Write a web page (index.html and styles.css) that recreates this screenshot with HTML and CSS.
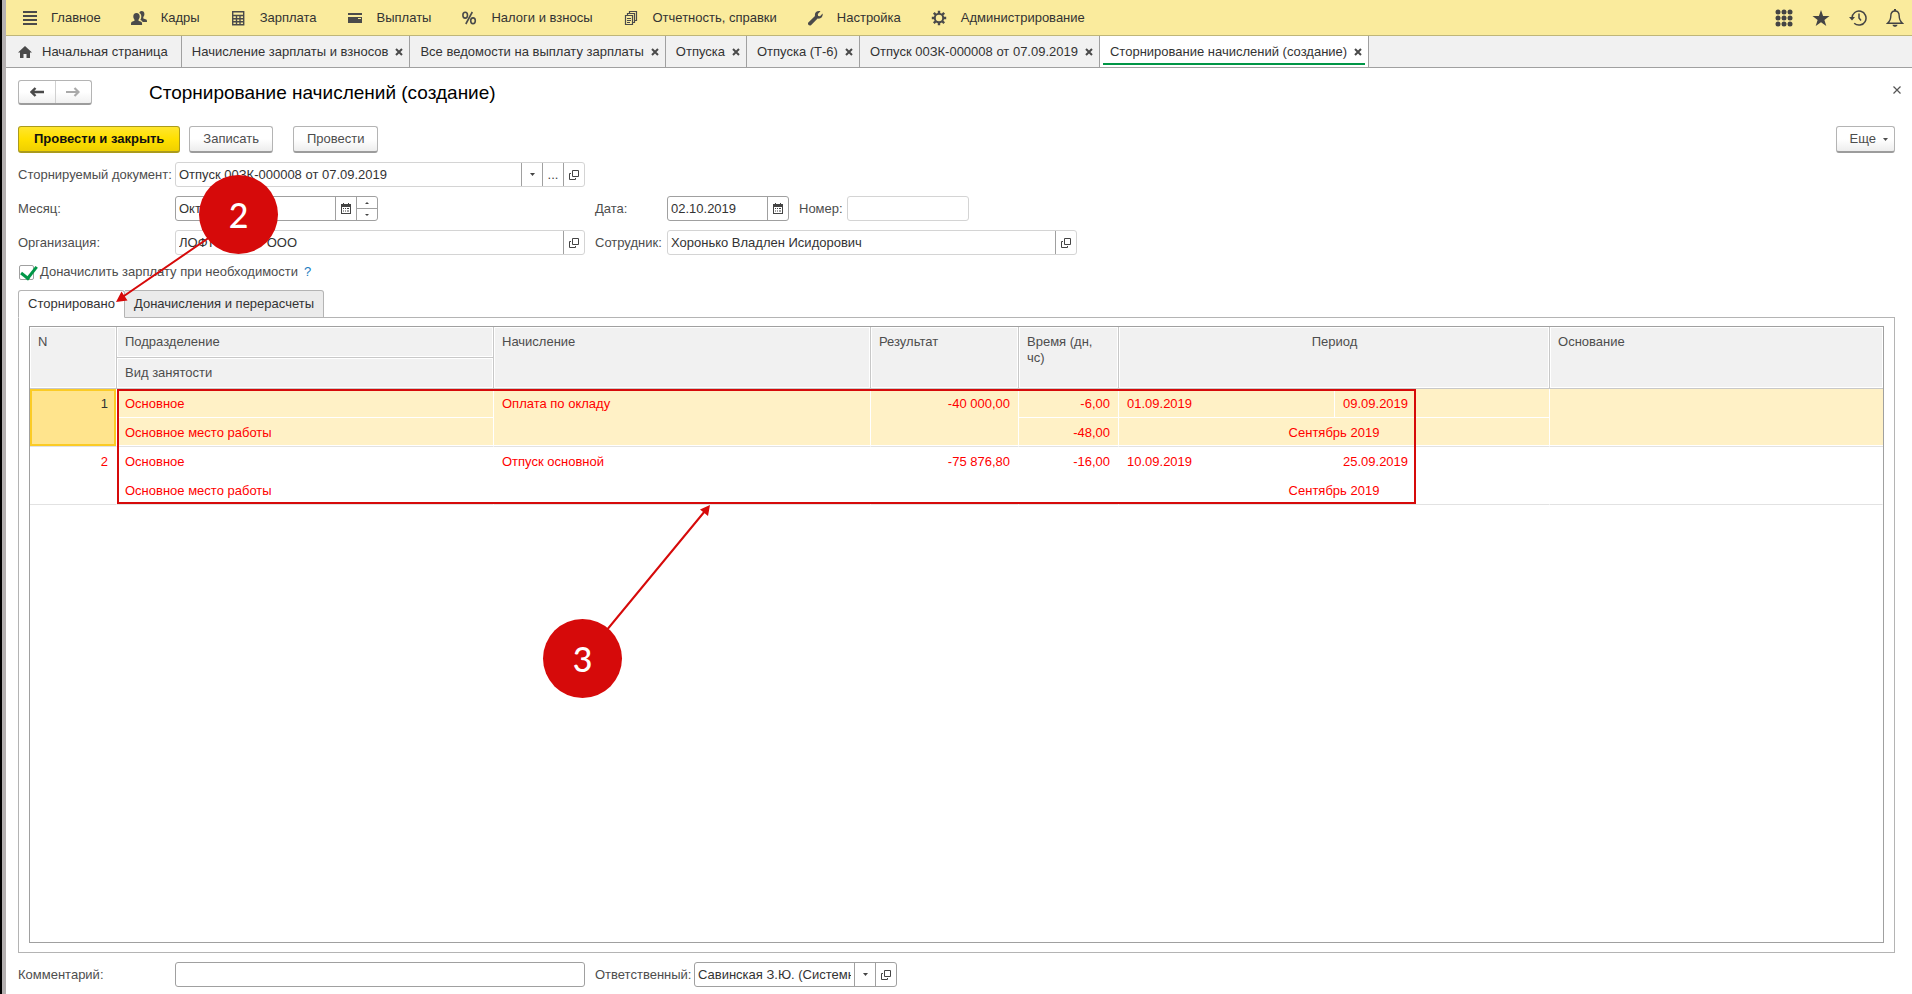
FILE: index.html
```html
<!DOCTYPE html>
<html lang="ru">
<head>
<meta charset="utf-8">
<title>Сторнирование начислений (создание)</title>
<link rel="stylesheet" href="styles.css">
</head>
<body>
<svg class="defs" aria-hidden="true">
  <symbol id="close" viewBox="0 0 8 8"><path d="M1 1l6 6M7 1L1 7" stroke="currentColor" stroke-width="2" fill="none"/></symbol>
  <symbol id="caret" viewBox="0 0 5 3"><path d="M0 0h5L2.500 3z" fill="currentColor"/></symbol>
  <symbol id="open" viewBox="0 0 10 10"><path d="M3.500.5h6v6h-6zM2 3.500H.5v6h6V8" stroke="currentColor" fill="none"/></symbol>
  <symbol id="calendar" viewBox="0 0 10 11"><path d="M0 1h2V0h1v1h4V0h1v1h2v10H0zM1 4v6h8V4z" fill="currentColor" fill-rule="evenodd"/><path d="M2 5.500h1M4 5.500h1M6 5.500h2M2 8h1M4 8h1M6 8h2" stroke="currentColor"/></symbol>
</svg>
<div class="app">
  <header class="topbar">
    <nav class="sections">
      <a class="section" href="#"><svg class="section-icon" viewBox="0 0 16 16"><path d="M2 2h14M2 6h14M2 10h14M2 14h14" stroke="currentColor" stroke-width="2"/></svg>Главное</a>
      <a class="section" href="#"><svg class="section-icon" viewBox="0 0 16 16"><path d="M10.500 1c2 0 2.900 1.300 2.900 3 0 1.400-.5 2.400-1.100 3v1.500l2.900 1c.7.400.8 1 .8 2.500h-4.400c-.3-.9-1.200-1.500-2.300-1.900.7-1 1-2.300 1-3.600 0-1.700-.7-2.900-2-3.500C8.600 1.700 9.300 1 10.500 1z" fill="currentColor"/><path d="M5.500 3C7.600 3 8.700 4.500 8.700 6.500c0 1.400-.6 2.500-1.200 3.200v1.100l2.700 1c.8.400.9 1.200.9 3.200H0c0-2 .1-2.800.9-3.200l2.600-1V9.700C2.900 9 2.300 7.900 2.300 6.500c0-2 1-3.500 3.200-3.500z" fill="currentColor"/></svg>Кадры</a>
      <a class="section" href="#"><svg class="section-icon" viewBox="0 0 16 16"><path d="M2.700 1.700h11v13h-11zM3 5.500h11M6.500 6v9M10 6v9M3 8.700h11M3 11.700h11" stroke="currentColor" stroke-width="1.400" fill="none"/></svg>Зарплата</a>
      <a class="section" href="#"><svg class="section-icon" viewBox="0 0 16 16"><path d="M1 3h14v2H1zM1 7h14v6H1z" fill="currentColor"/><path d="M11 8h3v1h-3z" fill="#faeb9d"/></svg>Выплаты</a>
      <a class="section" href="#"><svg class="section-icon" viewBox="0 0 16 16"><g stroke="currentColor" stroke-width="1.600" fill="none"><ellipse cx="4.200" cy="5.200" rx="2.300" ry="2.900"/><ellipse cx="12" cy="10.800" rx="2.300" ry="2.900"/><path d="M11.300 2L4.800 14"/></g></svg>Налоги и взносы</a>
      <a class="section" href="#"><svg class="section-icon" viewBox="0 0 16 16"><path d="M2.500 5.500h7v9h-7zM4.500 5V3.500h7v9H10M6.500 3V1.500h7v9H12M4 8.500h4M4 10.500h4M4 12.500h3" stroke="currentColor" stroke-width="1.200" fill="none"/></svg>Отчетность, справки</a>
      <a class="section" href="#"><svg class="section-icon" viewBox="0 0 16 16"><path d="M13.500 1.300L10.800 4l.3 1.900 1.900.3 2.600-2.700c.7 3.200-1.800 5.800-5 5L4 15.200c-1.700 1.300-3.900-.9-2.700-2.700L8 6C7.200 2.700 10.200.2 13.500 1.300z" fill="currentColor"/></svg>Настройка</a>
      <a class="section" href="#"><svg class="section-icon" viewBox="0 0 16 16"><circle cx="8" cy="8" r="4.200" stroke="currentColor" stroke-width="2" fill="none"/><path d="M8 .8v3M8 12.200v3M.8 8h3M12.200 8h3M2.800 2.800L5 5M11 11l2.200 2.200M13.200 2.800L11 5M5 11l-2.200 2.200" stroke="currentColor" stroke-width="2.400"/></svg>Администрирование</a>
    </nav>
    <div class="tools">
      <button class="tool" aria-label="Функции"><svg viewBox="0 0 18 18"><g fill="currentColor"><circle cx="3" cy="3" r="2.500"/><circle cx="9" cy="3" r="2.500"/><circle cx="15" cy="3" r="2.500"/><circle cx="3" cy="9" r="2.500"/><circle cx="9" cy="9" r="2.500"/><circle cx="15" cy="9" r="2.500"/><circle cx="3" cy="15" r="2.500"/><circle cx="9" cy="15" r="2.500"/><circle cx="15" cy="15" r="2.500"/></g></svg></button>
      <button class="tool" aria-label="Избранное"><svg viewBox="0 0 18 18"><path d="M9 1l2.100 6 6.400.1-5.100 3.800 1.900 6.100L9 13.300 3.700 17l1.900-6.100L.5 7.100 6.900 7z" fill="currentColor"/></svg></button>
      <button class="tool" aria-label="История"><svg viewBox="0 0 18 18"><path d="M3 9a7 7 0 1 1 2.200 5.200M10 4.500V9l2 2.500" stroke="currentColor" stroke-width="1.500" fill="none"/><path d="M0 8h6l-3 3.500z" fill="currentColor"/></svg></button>
      <button class="tool" aria-label="Оповещения"><svg viewBox="0 0 18 18"><path d="M9 2c3 0 4.200 2.300 4.200 5 0 4 1.200 5.500 3.300 7.300h-15C3.600 12.500 4.800 11 4.800 7c0-2.700 1.200-5 4.200-5z" stroke="currentColor" stroke-width="1.400" fill="none"/><path d="M8 0h2v2H8zM6.500 15.800h5c-.3 1.400-1.200 2-2.500 2s-2.200-.6-2.500-2z" fill="currentColor"/></svg></button>
    </div>
  </header>

  <nav class="windows">
    <a class="window window-home" href="#"><svg class="home" viewBox="0 0 14 12"><path d="M7 0l7 6.500h-2V12H8.500V8h-3v4H2V6.500H0z" fill="currentColor"/></svg>Начальная страница</a>
    <div class="window"><a href="#">Начисление зарплаты и взносов</a><button class="window-close" aria-label="Закрыть"><svg><use href="#close"/></svg></button></div>
    <div class="window"><a href="#">Все ведомости на выплату зарплаты</a><button class="window-close" aria-label="Закрыть"><svg><use href="#close"/></svg></button></div>
    <div class="window"><a href="#">Отпуска</a><button class="window-close" aria-label="Закрыть"><svg><use href="#close"/></svg></button></div>
    <div class="window"><a href="#">Отпуска (Т-6)</a><button class="window-close" aria-label="Закрыть"><svg><use href="#close"/></svg></button></div>
    <div class="window"><a href="#">Отпуск 00ЗК-000008 от 07.09.2019</a><button class="window-close" aria-label="Закрыть"><svg><use href="#close"/></svg></button></div>
    <div class="window window-active"><a href="#">Сторнирование начислений (создание)</a><button class="window-close" aria-label="Закрыть"><svg><use href="#close"/></svg></button></div>
  </nav>

  <main class="form">
    <div class="heading">
      <div class="history">
        <button class="history-button" aria-label="Назад"><svg viewBox="0 0 14 10"><path d="M5.500 1L1.500 5l4 4M2 5h12" stroke="currentColor" stroke-width="2.400" fill="none"/></svg></button>
        <button class="history-button" aria-label="Вперед" disabled><svg viewBox="0 0 14 10"><path d="M8.500 1l4 4-4 4M12 5H0" stroke="currentColor" stroke-width="2.200" fill="none"/></svg></button>
      </div>
      <h1>Сторнирование начислений (создание)</h1>
      <button class="form-close" aria-label="Закрыть форму"><svg viewBox="0 0 8 8"><path d="M.5.5l7 7M7.500.5l-7 7" stroke="currentColor" stroke-width="1.200"/></svg></button>
    </div>

    <div class="commands">
      <button class="command command-primary">Провести и закрыть</button>
      <button class="command">Записать</button>
      <button class="command command-apart">Провести</button>
      <button class="command command-more">Еще<svg class="caret"><use href="#caret"/></svg></button>
    </div>

    <div class="fields">
      <div class="row">
        <label class="label-main" for="doc">Сторнируемый документ:</label>
        <div class="field field-wide field-light"><input id="doc" value="Отпуск 00ЗК-000008 от 07.09.2019"><button aria-label="Выбрать из списка"><svg class="caret"><use href="#caret"/></svg></button><button aria-label="Показать все">...</button><button aria-label="Открыть"><svg class="glyph"><use href="#open"/></svg></button></div>
      </div>
      <div class="row">
        <div class="column">
          <label class="label-main" for="month">Месяц:</label>
          <div class="field field-small"><input id="month" value="Октябрь 2019"><button aria-label="Календарь"><svg class="glyph glyph-tall"><use href="#calendar"/></svg></button><span class="spinner"><button aria-label="Больше"><svg viewBox="0 0 4 2"><path d="M0 2h4L2 0z" fill="currentColor"/></svg></button><button aria-label="Меньше"><svg viewBox="0 0 4 2"><path d="M0 0h4L2 2z" fill="currentColor"/></svg></button></span></div>
        </div>
        <label class="label-side" for="date">Дата:</label>
        <div class="field field-date"><input id="date" value="02.10.2019"><button aria-label="Календарь"><svg class="glyph glyph-tall"><use href="#calendar"/></svg></button></div>
        <label class="label-number" for="number">Номер:</label>
        <div class="field field-date field-light"><input id="number"></div>
      </div>
      <div class="row">
        <div class="column">
          <label class="label-main" for="org">Организация:</label>
          <div class="field field-wide field-light"><input id="org" value="ЛОФТ ТЕХНО ООО"><button aria-label="Открыть"><svg class="glyph"><use href="#open"/></svg></button></div>
        </div>
        <label class="label-side" for="person">Сотрудник:</label>
        <div class="field field-wide field-light"><input id="person" value="Хоронько Владлен Исидорович"><button aria-label="Открыть"><svg class="glyph"><use href="#open"/></svg></button></div>
      </div>
      <div class="check-row">
        <input class="check" type="checkbox" id="extra" checked><label for="extra">Доначислить зарплату при необходимости</label><a class="help" href="#">?</a>
      </div>
    </div>

    <div class="tabs" role="tablist">
      <button class="tab tab-active" role="tab" aria-selected="true">Сторнировано</button>
      <button class="tab" role="tab" aria-selected="false">Доначисления и перерасчеты</button>
    </div>

    <section class="panel">
      <div class="grid">
        <table>
          <colgroup><col class="c-num"><col class="c-name"><col class="c-name"><col class="c-sum"><col class="c-time"><col class="c-from"><col class="c-to"><col class="c-rest"><col></colgroup>
          <thead>
            <tr><th rowspan="2">N</th><th>Подразделение</th><th rowspan="2">Начисление</th><th rowspan="2">Результат</th><th rowspan="2">Время (дн, чс)</th><th class="center" colspan="3" rowspan="2">Период</th><th rowspan="2">Основание</th></tr>
            <tr><th>Вид занятости</th></tr>
          </thead>
          <tbody class="selected">
            <tr><td class="num current" rowspan="2">1</td><td>Основное</td><td rowspan="2">Оплата по окладу</td><td class="num" rowspan="2">-40 000,00</td><td class="num">-6,00</td><td>01.09.2019</td><td class="num period-end">09.09.2019</td><td></td><td rowspan="2"></td></tr>
            <tr><td>Основное место работы</td><td class="num">-48,00</td><td class="center" colspan="3">Сентябрь 2019</td></tr>
          </tbody>
          <tbody>
            <tr><td class="num" rowspan="2">2</td><td>Основное</td><td rowspan="2">Отпуск основной</td><td class="num" rowspan="2">-75 876,80</td><td class="num">-16,00</td><td>10.09.2019</td><td class="num period-end">25.09.2019</td><td></td><td rowspan="2"></td></tr>
            <tr><td>Основное место работы</td><td></td><td class="center" colspan="3">Сентябрь 2019</td></tr>
          </tbody>
        </table>
        <div class="frame"></div>
      </div>
    </section>

    <div class="row footer">
      <div class="column">
        <label class="label-main" for="comment">Комментарий:</label>
        <div class="field field-wide"><input id="comment"></div>
      </div>
      <label class="label-owner" for="owner">Ответственный:</label>
      <div class="field field-small"><input id="owner" value="Савинская З.Ю. (Системный администратор)"><button aria-label="Выбрать из списка"><svg class="caret"><use href="#caret"/></svg></button><button aria-label="Открыть"><svg class="glyph"><use href="#open"/></svg></button></div>
    </div>
  </main>
</div>

<svg class="arrows" aria-hidden="true">
  <g stroke="#d60a0a" stroke-width="2"><path d="M210 237L121 298M606 631L705 511"/></g>
  <path d="M116 302l5.500-10.500 6 9zM710 505l-2 11-8-6.500z" fill="#d60a0a"/>
</svg>
<div class="marker marker-two">2</div>
<div class="marker marker-three">3</div>
</body>
</html>
```

FILE: styles.css
```css
* { box-sizing: border-box; }

body {
  margin: 0;
  font: 13px/16px "Liberation Sans", Arial, sans-serif;
  color: #333;
  background: #fff;
}

a { color: inherit; text-decoration: none; }

button, input { font: inherit; color: inherit; }

button {
  display: flex;
  align-items: center;
  justify-content: center;
  padding: 0;
  border: 0;
  background: none;
}

.defs { position: absolute; width: 0; height: 0; }

.app {
  display: flex;
  flex-direction: column;
  min-height: 100vh;
  border-left: 2px solid #000;
  box-shadow: inset 4px 0 0 #b4b0b0;
  padding-left: 4px;
}

/* Section bar */
.topbar {
  display: flex;
  justify-content: space-between;
  height: 36px;
  padding: 0 8px 0 15px;
  background: #faeb9d;
  border-bottom: 1px solid #bfb679;
}

.sections { display: flex; gap: 30px; }

.section {
  display: flex;
  align-items: center;
  gap: 14px;
  white-space: nowrap;
}

.section-icon { width: 16px; height: 16px; color: #4a4a4a; }

.tools { display: flex; align-items: center; gap: 19px; color: #444; }

.tool svg { width: 18px; height: 18px; }

/* Open windows */
.windows {
  display: flex;
  height: 32px;
  background: #f1f1f1;
  border-bottom: 1px solid #a0a0a0;
}

.window {
  display: flex;
  align-items: center;
  gap: 7px;
  padding: 0 6px 0 10px;
  border-right: 1px solid #a0a0a0;
  white-space: nowrap;
}

.window-home { gap: 10px; padding: 0 13px 0 12px; }

.home { width: 14px; height: 12px; color: #4a4a4a; }

.window-close svg { display: block; width: 8px; height: 8px; color: #4a4a4a; }

.window-active {
  background:
    linear-gradient(#009646, #009646) center bottom 2px / calc(100% - 6px) 2px no-repeat,
    #fff;
}

/* Form */
.form {
  flex: 1;
  display: flex;
  flex-direction: column;
  padding: 12px 17px 7px 12px;
}

.heading { display: flex; align-items: center; height: 25px; }

.history {
  display: flex;
  width: 74px;
  height: 25px;
  border: 1px solid #b4b4b4;
  border-bottom: 2px solid #9c9c9c;
  border-radius: 3px;
  background: linear-gradient(#fff 50%, #f0f0f0);
}

.history-button { flex: 1; color: #4a4a4a; }
.history-button + .history-button { border-left: 1px solid #d0d0d0; }
.history-button:disabled { color: #aaa; }
.history-button svg { width: 14px; height: 10px; }

h1 {
  margin: 0 auto 0 57px;
  padding-top: 1px;
  font-size: 19px;
  line-height: 24px;
  font-weight: 400;
  color: #000;
}

.form-close { width: 24px; height: 24px; margin: 0 -14px 6px 0; color: #555; }
.form-close svg { width: 8px; height: 8px; }

.commands { display: flex; gap: 9px; margin-top: 21px; }

.command {
  height: 27px;
  padding: 0 13px;
  border: 1px solid #b4b4b4;
  border-bottom: 2px solid #9c9c9c;
  border-radius: 3px;
  background: linear-gradient(#fff 50%, #ededed);
  color: #4d4d4d;
  white-space: nowrap;
}

.command-primary {
  padding: 0 15px;
  border-color: #ab9b1c;
  background: linear-gradient(#ffe62e, #ffe000 50%, #efd000);
  color: #111;
  font-weight: 700;
}

.command-apart { margin-left: 11px; }
.command-more { margin-left: auto; gap: 7px; padding: 0 6px 0 13px; }

.caret { width: 5px; height: 3px; }
.glyph { width: 10px; height: 10px; }
.glyph-tall { height: 11px; }

.fields { display: flex; flex-direction: column; gap: 9px; margin-top: 9px; }

.row { display: flex; align-items: center; }
.column { display: flex; align-items: center; width: 577px; }
.row label, .check-row label { color: #4d4d4d; white-space: nowrap; }

.label-main { width: 157px; }
.label-side { width: 72px; }
.label-number { width: 58px; padding-left: 10px; }
.label-owner { width: 99px; }

.field {
  display: flex;
  height: 25px;
  border: 1px solid #a0a0a0;
  border-radius: 3px;
  background: #fff;
}

.field-light { border-color: #d4d4d4; }
.field-wide { width: 410px; }
.field-small { width: 203px; }
.field-date { width: 122px; }

.field input {
  flex: 1;
  min-width: 0;
  padding: 0 3px;
  border: 0;
  background: none;
  outline: 0;
}

.field > button, .spinner { width: 21px; border-left: 1px solid #a0a0a0; color: #444; }

.spinner { display: flex; flex-direction: column; }
.spinner button { flex: 1; }
.spinner button + button { border-top: 1px solid #a0a0a0; }
.spinner svg { width: 4px; height: 2px; }

.check-row { display: flex; align-items: center; height: 16px; }

.check {
  position: relative;
  appearance: none;
  width: 15px;
  height: 15px;
  margin: 0 6px 0 1px;
  border: 1px solid #a0a0a0;
  border-radius: 2px;
  background: #fff;
}

.check:checked::after {
  content: "";
  position: absolute;
  left: 4px;
  top: -3px;
  width: 7px;
  height: 13px;
  border: solid #009646;
  border-width: 0 3px 3px 0;
  transform: rotate(38deg);
}

.help { margin-left: 6px; color: #1a7cc0; }

/* Tabs and grid */
.tabs { position: relative; z-index: 1; display: flex; margin-top: 10px; }

.tab {
  height: 28px;
  padding: 0 9px;
  border: 1px solid #b4b4b4;
  border-left: 0;
  background: #ebebeb;
  white-space: nowrap;
  border-radius: 0 3px 0 0;
}

.tab-active {
  border-left: 1px solid #b4b4b4;
  border-bottom-color: #fff;
  border-radius: 3px 3px 0 0;
  background: #fff;
}

.panel {
  flex: 1;
  display: flex;
  margin-top: -1px;
  padding: 8px 10px 9px;
  border: 1px solid #b4b4b4;
}

.grid { flex: 1; position: relative; border: 1px solid #a0a0a0; }

table {
  width: 100%;
  table-layout: fixed;
  border-collapse: separate;
  border-spacing: 0;
}

.c-num { width: 87px; }
.c-name { width: 377px; }
.c-sum { width: 148px; }
.c-time { width: 100px; }
.c-from { width: 216px; }
.c-to { width: 80px; }
.c-rest { width: 135px; }

th {
  height: 31px;
  padding: 7px 7px 0 8px;
  border-right: 1px solid #c8c8c8;
  border-bottom: 1px solid #c8c8c8;
  box-shadow: inset 0 0 0 1px #fff;
  background: #f1f1f1;
  color: #4d4d4d;
  font-weight: 400;
  text-align: left;
  vertical-align: top;
}

th:last-child:not(:first-child) { border-right: 0; }

td {
  height: 29px;
  padding: 7px 8px 5px;
  border-right: 1px solid transparent;
  color: #f00;
  vertical-align: top;
}

.num { text-align: right; }
.center { text-align: center; }

tbody td[rowspan], tbody tr:last-child td { border-bottom: 1px solid #e2e2e2; }

.selected td {
  background: #fff1c6;
  border-right-color: #fff;
}

.selected tr:first-child td:not([rowspan]) { border-bottom: 1px solid #fff; }
.selected .period-end, .selected tr:first-child td:last-child { border-right: 0; }
.selected tr:last-child td, .selected td[rowspan] { box-shadow: inset 0 -1px 0 #fff; }

.selected td.current {
  background: #ffe48d;
  box-shadow: inset 0 0 0 2px #fbcb25;
  color: #333;
}

.frame {
  position: absolute;
  left: 87px;
  top: 62px;
  width: 1299px;
  height: 115px;
  border: 2px solid #d60a0a;
}

.footer { margin-top: 9px; }

/* Step markers */
.arrows {
  position: absolute;
  left: 0;
  top: 0;
  z-index: 2;
  width: 800px;
  height: 720px;
  pointer-events: none;
}

.marker {
  position: absolute;
  z-index: 3;
  display: flex;
  align-items: center;
  justify-content: center;
  width: 79px;
  height: 79px;
  border-radius: 50%;
  background: #d60a0a;
  color: #fff;
  font: 500 34px/40px Lato, sans-serif;
}

.marker-two { left: 199px; top: 175px; }
.marker-three { left: 543px; top: 619px; }
```
